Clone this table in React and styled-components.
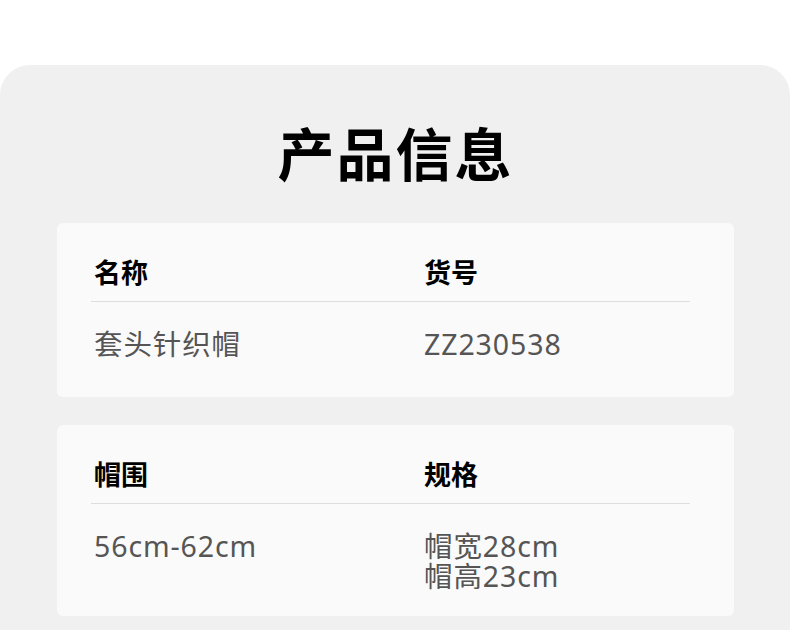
import React from 'react'
import styled, { createGlobalStyle } from 'styled-components'

const GlobalStyle = createGlobalStyle`
    html, body {
        margin: 0;
        padding: 0;
        background: #ffffff;
        font-family: "Noto Sans CJK SC", "Noto Sans", sans-serif;
    }
`
const Page = styled.div`
    width: 790px;
    padding-top: 65px;
`
const Panel = styled.section`
    background-color: #f0f0f0;
    border-radius: 30px 30px 0 0;
    padding: 51px 56px 15px 57px;
    display: flex;
    flex-direction: column;
    gap: 28px;
`
const Title = styled.h1`
    margin: 0 0 9px 0;
    text-align: center;
    font-size: 57px;
    line-height: 70px;
    font-weight: 700;
    color: #000;
    letter-spacing: 2px;
`
const Card = styled.div`
    background-color: #fafafa;
    border-radius: 6px;
    padding: 29px 44px 25px 34px;
`
const Grid = styled.div`
    display: grid;
    grid-template-columns: 330px 1fr;
`
const Label = styled.div`
    font-size: 27px;
    line-height: 40px;
    font-weight: 700;
    color: #000;
    padding: 0 0 9px 3px;
    border-bottom: 1px solid #dedede;
`
const Value = styled.div`
    font-family: "Noto Sans", "Noto Sans CJK SC", sans-serif;
    font-size: 28.5px;
    line-height: 30px;
    font-weight: 400;
    letter-spacing: 0.9px;
    color: #555;
    padding: 27px 0 0 3px;
    min-height: 43px;
`

const rows = [
    [
        { label: '名称', value: ['套头针织帽'] },
        { label: '货号', value: ['ZZ230538'] }
    ],
    [
        { label: '帽围', value: ['56cm-62cm'] },
        { label: '规格', value: ['帽宽28cm', '帽高23cm'] }
    ]
]

export default function App() {
    return (
        <Page>
            <GlobalStyle />
            <Panel>
                <Title>产品信息</Title>
                {rows.map((row, i) => (
                    <Card key={i}>
                        <Grid>
                            {row.map(item => (
                                <Label key={item.label}>{item.label}</Label>
                            ))}
                            {row.map(item => (
                                <Value key={item.label}>
                                    {item.value.map(line => (
                                        <div key={line}>{line}</div>
                                    ))}
                                </Value>
                            ))}
                        </Grid>
                    </Card>
                ))}
            </Panel>
        </Page>
    )
}
